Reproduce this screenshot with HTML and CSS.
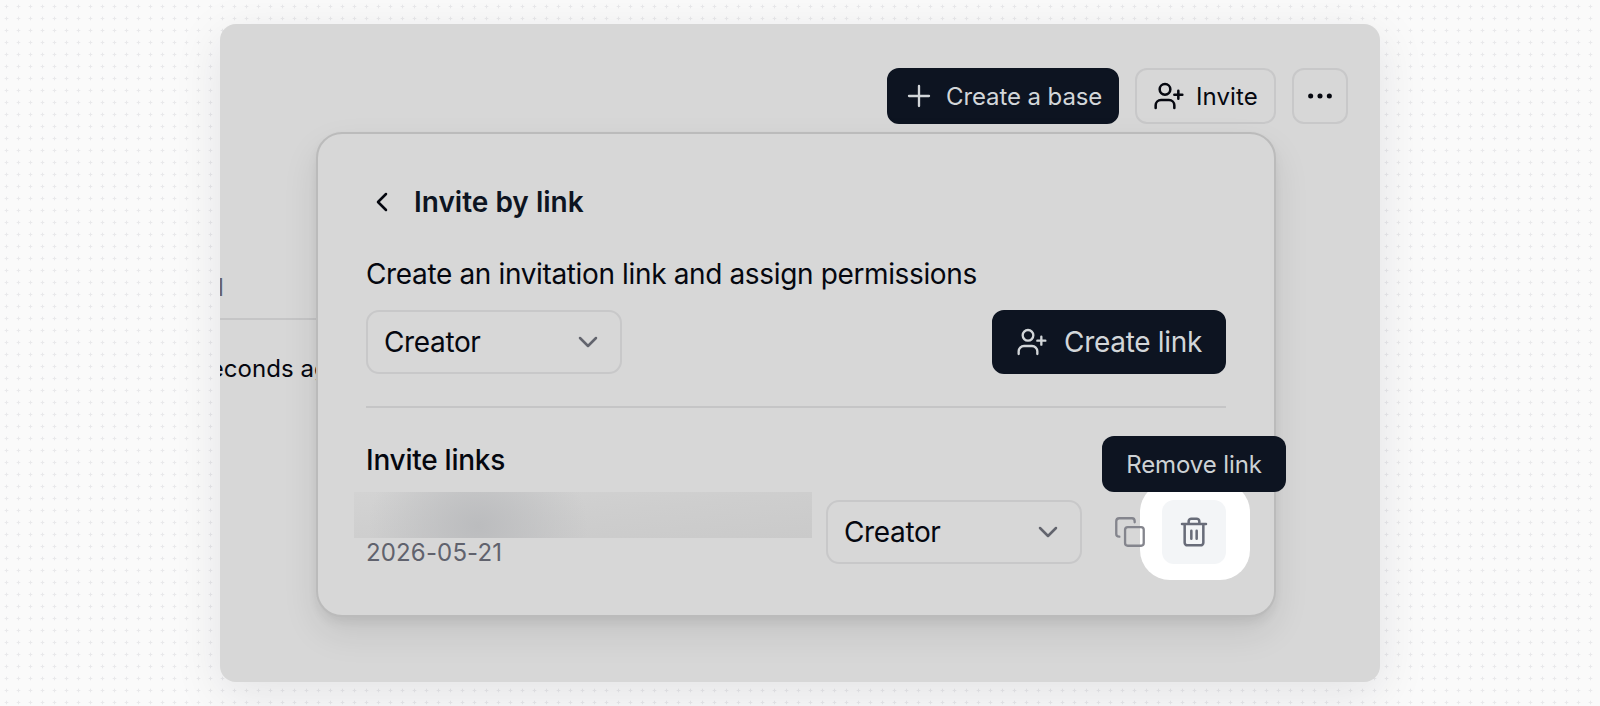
FILE: index.html
```
<!DOCTYPE html>
<html lang="en">
<head>
    <meta charset="UTF-8">
    <meta name="viewport" content="width=device-width, initial-scale=1.0">
    <title>Invite by link</title>
    <link rel="stylesheet" href="styles.css">
</head>
<body>
    <main class="card">
        <header class="toolbar">
            <button class="btn btn-dark btn-base">
                <svg class="icon icon-thin" viewBox="0 0 24 24"><path d="M4.500 12h15M12 4.500v15"/></svg>
                <span>Create a base</span>
            </button>
            <button class="btn btn-outline btn-invite">
                <svg class="icon" viewBox="0 0 24 24"><path d="M16 21v-2a4 4 0 0 0-4-4H6a4 4 0 0 0-4 4v2"/><circle cx="9" cy="7" r="4"/><path d="M19 8v6M22 11h-6"/></svg>
                <span>Invite</span>
            </button>
            <button class="btn btn-outline btn-more" aria-label="More">
                <svg class="icon icon-solid" viewBox="0 0 24 24"><circle cx="5" cy="12" r="1.900"/><circle cx="12" cy="12" r="1.900"/><circle cx="19" cy="12" r="1.900"/></svg>
            </button>
        </header>

        <section class="list">
            <div class="list-head">l</div>
            <div class="list-row">seconds ago</div>
        </section>

        <section class="panel">
            <div class="panel-title">
                <svg class="icon" viewBox="0 0 24 24"><path d="m15 18-6-6 6-6"/></svg>
                <h1>Invite by link</h1>
            </div>
            <p class="intro">Create an invitation link and assign permissions</p>
            <div class="create-row">
                <div class="select">
                    <span>Creator</span>
                    <svg class="icon" viewBox="0 0 24 24"><path d="m6 9 6 6 6-6"/></svg>
                </div>
                <button class="btn btn-dark btn-link">
                    <svg class="icon icon-thin" viewBox="0 0 24 24"><path d="M16 21v-2a4 4 0 0 0-4-4H6a4 4 0 0 0-4 4v2"/><circle cx="9" cy="7" r="4"/><path d="M19 8v6M22 11h-6"/></svg>
                    <span>Create link</span>
                </button>
            </div>
            <hr>
            <h2>Invite links</h2>
            <div class="link-row">
                <div class="link-info">
                    <div class="link-url"></div>
                    <div class="link-date">2026-05-21</div>
                </div>
                <div class="select">
                    <span>Creator</span>
                    <svg class="icon" viewBox="0 0 24 24"><path d="m6 9 6 6 6-6"/></svg>
                </div>
                <svg class="icon icon-thin icon-copy" viewBox="0 0 24 24"><rect x="8.300" y="8.300" width="14" height="14" rx="2"/><path d="M4 15.500c-1.300 0-2.300-.9-2.300-2V4c0-1.300.9-2.300 2.300-2.300h9.500c1.300 0 2 .9 2 2.300v.7"/></svg>
                <div class="remove">
                    <div class="spotlight"></div>
                    <button class="btn-trash" aria-label="Remove link">
                        <svg class="icon" viewBox="0 0 24 24"><path d="M3 6h18M19 6v14c0 1-1 2-2 2H7c-1 0-2-1-2-2V6M8 6V4c0-1 1-2 2-2h4c1 0 2 1 2 2v2M10 11v6M14 11v6"/></svg>
                    </button>
                    <div class="tooltip">Remove link</div>
                </div>
            </div>
        </section>
    </main>
</body>
</html>
```
FILE: styles.css
```
* {
    box-sizing: border-box;
}
body {
    margin: 0;
    height: 706px;
    padding: 24px 220px;
    overflow: hidden;
    font-family: Inter, "Liberation Sans", sans-serif;
    color: #05070f;
    background-color: #fafafa;
    background-image:
        radial-gradient(2.2px 0.9px at 6.5px 6.5px, #e9e9eb 70%, transparent),
        radial-gradient(0.9px 2.2px at 6.5px 6.5px, #e9e9eb 70%, transparent);
    background-size: 12px 12px;
}
.card {
    position: relative;
    height: 658px;
    border-radius: 16px;
    background-color: #d7d7d7;
    box-shadow: 0 12px 48px rgba(15, 23, 42, 0.1);
}
.icon {
    width: 32px;
    height: 32px;
    flex: none;
    fill: none;
    stroke: currentColor;
    stroke-width: 1.9;
    stroke-linecap: round;
    stroke-linejoin: round;
}
.icon-thin {
    stroke-width: 1.75;
}
.icon-solid {
    fill: currentColor;
    stroke: none;
}

/* buttons */
.btn {
    display: flex;
    align-items: center;
    border-radius: 12px;
    border: 2px solid transparent;
    font: inherit;
    white-space: nowrap;
}
.btn-dark {
    border-color: #0d1421;
    background-color: #0d1421;
    color: #d2d6d9;
}
.btn-outline {
    border-color: #c8c8c9;
    background: none;
    color: #05070f;
}
.toolbar {
    display: flex;
    justify-content: flex-end;
    gap: 16px;
    padding: 44px 32px 0 0;
    font-size: 24px;
}
.toolbar .btn {
    height: 56px;
    padding: 0 14px;
    gap: 11px;
}
.toolbar .btn-base {
    width: 232px;
    letter-spacing: -0.1px;
}
.toolbar .btn-invite {
    width: 141px;
    padding: 0 16px;
    letter-spacing: 0.1px;
}
.toolbar .btn-more {
    width: 56px;
    padding: 0;
    justify-content: center;
}

/* table behind the panel */
.list {
    width: 96px;
    margin-top: 144px;
    overflow: hidden;
    white-space: nowrap;
    font-size: 24px;
    line-height: 48px;
}
.list-head {
    height: 52px;
    border-bottom: 2px solid #c5c5c6;
    color: #5f616c;
    line-height: 40px;
    text-indent: -2px;
}
.list-row {
    padding-top: 25px;
    text-indent: -23px;
    letter-spacing: 0.05px;
}

/* invite panel */
.panel {
    position: absolute;
    left: 96px;
    top: 108px;
    width: 960px;
    height: 485px;
    padding: 48px;
    border: 2px solid #bbb;
    border-radius: 26px;
    background-color: #d7d7d7;
    box-shadow: 0 16px 36px rgba(0, 0, 0, 0.09), 0 6px 12px -2px rgba(0, 0, 0, 0.08);
    font-size: 28px;
    line-height: 40px;
    letter-spacing: -0.36px;
}
.panel-title {
    display: flex;
    align-items: center;
    gap: 16px;
}
.panel h1 {
    margin: 0;
    font-size: 28px;
    font-weight: 600;
    letter-spacing: 0;
    color: #0d1421;
}
.panel h2 {
    margin: 0;
    font-size: 28px;
    font-weight: 550;
    letter-spacing: -0.25px;
}
.intro {
    margin: 32px 0 16px;
}
.create-row {
    display: flex;
    justify-content: space-between;
}
.select {
    display: flex;
    align-items: center;
    justify-content: space-between;
    flex: none;
    width: 256px;
    height: 64px;
    padding: 0 16px;
    border: 2px solid #c8c8c9;
    border-radius: 13px;
}
.select .icon {
    color: #62646d;
}
.btn-link {
    width: 234px;
    height: 64px;
    padding: 0 22px;
    gap: 16px;
    letter-spacing: -0.3px;
}
hr {
    height: 2px;
    margin: 32px 0;
    border: 0;
    background-color: #c5c5c6;
}
.link-row {
    display: flex;
    align-items: center;
    height: 80px;
    margin-top: 12px;
}
.link-info {
    flex: none;
    width: 460px;
    height: 80px;
}
.link-url {
    width: 458px;
    height: 46px;
    margin-left: -12px;
    background:
        radial-gradient(110px 90px at 124px 34px, #bbbcbe, rgba(190, 191, 193, 0)),
        linear-gradient(to bottom right, #d3d3d3, #cecece 50%, #cacaca);
}
.link-date {
    font-size: 24px;
    line-height: 30px;
    letter-spacing: 0.15px;
    color: #60626d;
}
.icon-copy {
    position: relative;
    z-index: 1;
    margin: 0 16px 0 32px;
    color: #84858d;
}
.remove {
    position: relative;
}
.spotlight {
    position: absolute;
    left: -22px;
    top: -18px;
    width: 110px;
    height: 98px;
    border-radius: 30px;
    background-color: #fff;
}
.btn-trash {
    position: relative;
    display: flex;
    align-items: center;
    justify-content: center;
    width: 64px;
    height: 64px;
    padding: 0;
    border: 0;
    border-radius: 12px;
    background-color: #f3f5f7;
    color: #686c79;
}
.tooltip {
    position: absolute;
    left: -60px;
    bottom: 72px;
    width: 184px;
    height: 56px;
    border-radius: 12px;
    background-color: #0d1421;
    color: #cdd2d5;
    font-size: 24px;
    line-height: 57px;
    letter-spacing: -0.1px;
    text-align: center;
    white-space: nowrap;
}
```
